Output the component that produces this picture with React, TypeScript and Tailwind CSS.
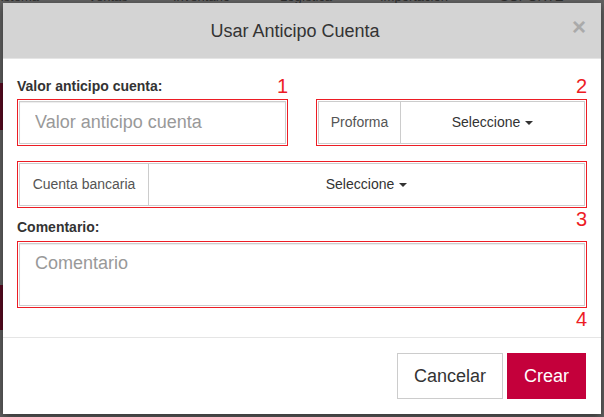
import { ReactNode } from 'react'

const font = { fontFamily: '"Liberation Sans", Arial, sans-serif' }

function Marker({ n }: { n: string }) {
  return <span className="text-[20px] leading-[20px] text-[#ed1c24]">{n}</span>
}

function Caret() {
  return (
    <svg width="8" height="4" viewBox="0 0 8 4" className="shrink-0">
      <path d="M0 0h8L4 4z" fill="#333" />
    </svg>
  )
}

function Outline({ children, h }: { children: ReactNode; h: string }) {
  return <div className={`border border-[#ed1c24] p-[1px] ${h}`}>{children}</div>
}

function SelectGroup({ label, addon }: { label: string; addon: string }) {
  return (
    <div className="flex h-full border border-[#ccc] bg-white">
      <div className={`flex items-center justify-center border-r border-[#ccc] text-[14px] text-[#555] ${addon}`}>{label}</div>
      <button className="flex flex-1 items-center justify-center gap-[5px] text-[14px] text-[#333]">
        Seleccione
        <Caret />
      </button>
    </div>
  )
}

function Backdrop() {
  const items = ['Sistema', 'Ventas', 'Inventario', 'Logística', 'Importación', 'SOPORTE']
  return (
    <div className="flex h-full flex-col bg-[#636363]">
      <div className="-mt-[11px] flex h-[15px] text-[13px] leading-[15px] text-[#2e2e2e]">
        <span className="-ml-[8px] w-[96px]">{items[0]}</span>
        <span className="w-[85px]">{items[1]}</span>
        <span className="w-[107px]">{items[2]}</span>
        <span className="w-[100px]">{items[3]}</span>
        <span className="w-[120px]">{items[4]}</span>
        <span>{items[5]}</span>
      </div>
      <div className="mt-[79px] h-[47px] w-[40px] bg-[#5c0b22]" />
      <div className="mt-[155px] h-[45px] w-[40px] bg-[#5c0b22]" />
    </div>
  )
}

export default function App() {
  return (
    <div className="relative h-[417px] w-[604px] overflow-hidden" style={font}>
      <Backdrop />
      <div className="absolute left-[3px] top-[3px] flex h-[411px] w-[598px] flex-col bg-white shadow-[0_3px_9px_rgba(0,0,0,0.5)]">
        <div className="flex h-[56px] items-center border-b border-[#e5e5e5] bg-[#d4d4d4] px-[15px]">
          <h4 className="flex-1 text-center text-[18px] leading-[20px] text-[#333]">Usar Anticipo Cuenta</h4>
          <button className="-mt-[7px] text-[24px] font-bold leading-none text-[#aaa]">×</button>
        </div>

        <div className="flex flex-col px-[14px] pb-[8px] pt-[17px]">
          <div className="grid grid-cols-2 gap-x-[28px]">
            <div className="flex flex-col">
              <div className="mb-[3px] flex h-[20px] items-end justify-between">
                <label className="text-[14px] font-bold leading-[20px] text-[#333]">Valor anticipo cuenta:</label>
                <Marker n="1" />
              </div>
              <Outline h="h-[47px]">
                <input
                  placeholder="Valor anticipo cuenta"
                  className="h-full w-full border border-[#ccc] bg-white px-[15px] text-[18px] text-[#333] shadow-[inset_0_1px_1px_rgba(0,0,0,0.075)] outline-none placeholder:text-[#999]"
                />
              </Outline>
            </div>
            <div className="flex flex-col">
              <div className="mb-[3px] flex h-[20px] items-end justify-end">
                <Marker n="2" />
              </div>
              <Outline h="h-[47px]">
                <SelectGroup label="Proforma" addon="w-[82px]" />
              </Outline>
            </div>
          </div>

          <div className="mt-[15px]">
            <Outline h="h-[47px]">
              <SelectGroup label="Cuenta bancaria" addon="w-[129px]" />
            </Outline>
          </div>

          <div className="mb-[4px] flex h-[29px] items-start justify-between">
            <label className="mt-[9px] text-[14px] font-bold leading-[20px] text-[#333]">Comentario:</label>
            <span className="mt-[1px]">
              <Marker n="3" />
            </span>
          </div>
          <Outline h="h-[67px]">
            <textarea
              placeholder="Comentario"
              className="block h-full w-full resize-none border border-[#ccc] bg-white px-[15px] pt-[9px] text-[18px] leading-[20px] text-[#333] shadow-[inset_0_1px_1px_rgba(0,0,0,0.075)] outline-none placeholder:text-[#999]"
            />
          </Outline>
          <div className="mt-[1px] flex h-[20px] justify-end">
            <Marker n="4" />
          </div>
        </div>

        <div className="flex justify-end gap-[4px] border-t border-[#e5e5e5] px-[15px] pb-[15px] pt-[15px]">
          <button className="flex h-[46px] w-[106px] items-center justify-center border border-[#ccc] bg-white text-[18px] text-[#333]">
            Cancelar
          </button>
          <button className="flex h-[46px] w-[79px] items-center justify-center bg-[#c4003b] text-[18px] text-white">
            Crear
          </button>
        </div>
      </div>
    </div>
  )
}
